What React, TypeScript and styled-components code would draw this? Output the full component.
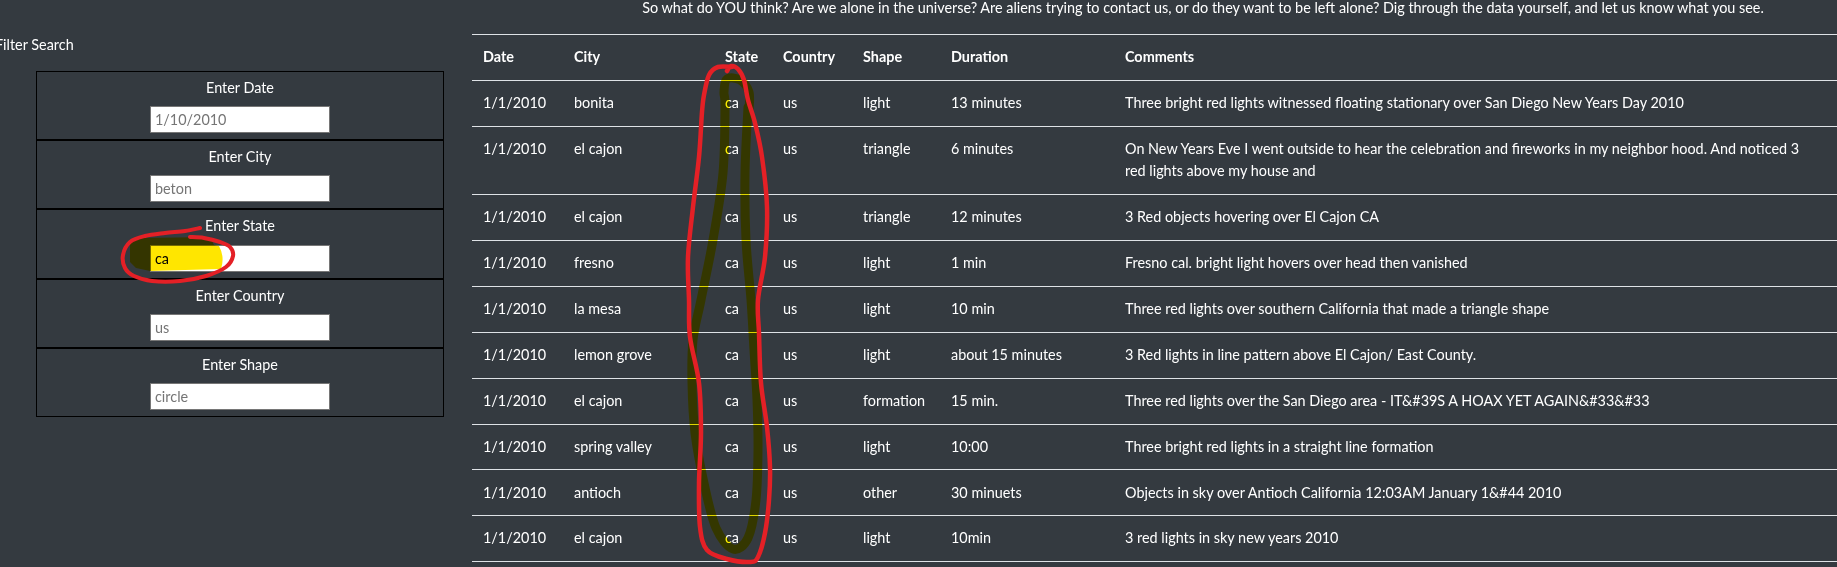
import React from "react";
import styled, { createGlobalStyle } from "styled-components";

const GlobalStyle = createGlobalStyle`
  html, body {
    margin: 0;
    padding: 0;
    background: #343a40;
    overflow: hidden;
  }
  body {
    font-family: Lato, "Open Sans", sans-serif;
    font-size: 14.4px;
    color: #ffffff;
  }
`;

type Sighting = {
  date: string;
  city: string;
  state: string;
  country: string;
  shape: string;
  duration: string;
  comments: string;
};

const sightings: Sighting[] = [
  { date: "1/1/2010", city: "bonita", state: "ca", country: "us", shape: "light", duration: "13 minutes", comments: "Three bright red lights witnessed floating stationary over San Diego New Years Day 2010" },
  { date: "1/1/2010", city: "el cajon", state: "ca", country: "us", shape: "triangle", duration: "6 minutes", comments: "On New Years Eve I went outside to hear the celebration and fireworks in my neighbor hood. And noticed 3 red lights above my house and" },
  { date: "1/1/2010", city: "el cajon", state: "ca", country: "us", shape: "triangle", duration: "12 minutes", comments: "3 Red objects hovering over El Cajon CA" },
  { date: "1/1/2010", city: "fresno", state: "ca", country: "us", shape: "light", duration: "1 min", comments: "Fresno cal. bright light hovers over head then vanished" },
  { date: "1/1/2010", city: "la mesa", state: "ca", country: "us", shape: "light", duration: "10 min", comments: "Three red lights over southern California that made a triangle shape" },
  { date: "1/1/2010", city: "lemon grove", state: "ca", country: "us", shape: "light", duration: "about 15 minutes", comments: "3 Red lights in line pattern above El Cajon/ East County." },
  { date: "1/1/2010", city: "el cajon", state: "ca", country: "us", shape: "formation", duration: "15 min.", comments: "Three red lights over the San Diego area - IT&#39S A HOAX YET AGAIN&#33&#33" },
  { date: "1/1/2010", city: "spring valley", state: "ca", country: "us", shape: "light", duration: "10:00", comments: "Three bright red lights in a straight line formation" },
  { date: "1/1/2010", city: "antioch", state: "ca", country: "us", shape: "other", duration: "30 minuets", comments: "Objects in sky over Antioch California 12:03AM January 1&#44 2010" },
  { date: "1/1/2010", city: "el cajon", state: "ca", country: "us", shape: "light", duration: "10min", comments: "3 red lights in sky new years 2010" },
];

const filters = [
  { label: "Enter Date", placeholder: "1/10/2010" },
  { label: "Enter City", placeholder: "beton" },
  { label: "Enter State", placeholder: "", value: "ca" },
  { label: "Enter Country", placeholder: "us" },
  { label: "Enter Shape", placeholder: "circle" },
];

const columns = [
  { title: "Date", width: 91 },
  { title: "City", width: 151 },
  { title: "State", width: 58 },
  { title: "Country", width: 80 },
  { title: "Shape", width: 88 },
  { title: "Duration", width: 174 },
  { title: "Comments" },
];

// catmull-rom -> bezier, for the hand drawn marks
const smooth = (pts: number[][]) => {
  const p = [pts[0], ...pts, pts[pts.length - 1]];
  let d = `M${p[1][0]} ${p[1][1]}`;
  for (let i = 1; i < p.length - 2; i++) {
    const [x0, y0] = p[i - 1];
    const [x1, y1] = p[i];
    const [x2, y2] = p[i + 1];
    const [x3, y3] = p[i + 2];
    d += ` C${x1 + (x2 - x0) / 6} ${y1 + (y2 - y0) / 6}, ${x2 - (x3 - x1) / 6} ${y2 - (y3 - y1) / 6}, ${x2} ${y2}`;
  }
  return d;
};

const tableLoop = [
  [732, 67], [718, 67], [709, 75], [704, 95], [702, 112], [699, 157], [693, 207], [688, 257],
  [689, 300], [690, 337], [699, 383], [701, 433], [699, 483], [700, 527], [707, 550], [727, 559],
  [750, 562], [758, 557], [765, 533], [769, 500], [770, 467], [767, 427], [761, 383], [759, 333],
  [758, 300], [765, 257], [767, 207], [762, 157], [755, 123], [748, 100], [744, 80], [738, 69],
  [731, 66], [727, 71],
];

const tableMarker = [
  [749, 110], [749, 92], [740, 80], [727, 79], [724, 92], [725, 107], [723, 173], [713, 240],
  [701, 300], [693, 340], [692, 383], [695, 433], [704, 483], [716, 528], [733, 549], [748, 538],
  [756, 500], [758, 450], [757, 400], [754, 350], [751, 300], [746, 240], [745, 173], [748, 107],
];

const formLoop = [
  [200, 228], [185, 231], [165, 233], [145, 236], [130, 242], [123, 255], [125, 268], [134, 276],
  [152, 281], [180, 281], [206, 276], [226, 267], [233, 256], [230, 247], [220, 242], [204, 238],
  [190, 237],
];

export default function App() {
  return (
    <Page>
      <GlobalStyle />
      <Sidebar>
        <SideTitle>Filter Search</SideTitle>
        <FilterPanel>
          {filters.map((f) => (
            <FilterItem key={f.label}>
              <FilterLabel>{f.label}</FilterLabel>
              <FilterInput
                type="text"
                placeholder={f.placeholder}
                defaultValue={f.value}
              />
            </FilterItem>
          ))}
        </FilterPanel>
      </Sidebar>
      <Main>
        <Intro>
          So what do YOU think? Are we alone in the universe? Are aliens trying to contact us, or do they want to be left
          alone? Dig through the data yourself, and let us know what you see.
        </Intro>
        <Table>
          <colgroup>
            {columns.map((c) => (
              <Col key={c.title} $w={c.width} />
            ))}
          </colgroup>
          <thead>
            <tr>
              {columns.map((c) => (
                <Th key={c.title}>{c.title}</Th>
              ))}
            </tr>
          </thead>
          <tbody>
            {sightings.map((s, i) => (
              <tr key={i}>
                <Td>{s.date}</Td>
                <Td>{s.city}</Td>
                <Td>{s.state}</Td>
                <Td>{s.country}</Td>
                <Td>{s.shape}</Td>
                <Td>{s.duration}</Td>
                <Td>{s.comments}</Td>
              </tr>
            ))}
          </tbody>
        </Table>
      </Main>

      <Marks $multiply viewBox="0 0 1837 567">
        <path
          d="M130 243 L139 238 L210 237 L214 245 L219 246 Q225 257 221 269 L150 271 L136 268 L130 262 Z"
          fill="#ffe600"
        />
        <path d={smooth(tableMarker)} fill="none" stroke="#fff200" strokeWidth={9} strokeLinecap="round" strokeLinejoin="round" />
      </Marks>
      <Marks viewBox="0 0 1837 567">
        <path d={smooth(formLoop)} fill="none" stroke="#e42026" strokeWidth={4} strokeLinecap="round" />
        <path d={smooth(tableLoop)} fill="none" stroke="#e42026" strokeWidth={4.5} strokeLinecap="round" />
      </Marks>
    </Page>
  );
}

const Page = styled.div`
  position: relative;
  display: flex;
  width: 1837px;
  height: 567px;
  overflow: hidden;
`;

const Sidebar = styled.aside`
  flex: none;
  width: 472px;
  padding-top: 34px;
  box-sizing: border-box;
`;

const SideTitle = styled.div`
  margin: 0 0 15px -5px;
  line-height: 22px;
`;

const FilterPanel = styled.div`
  margin-left: 36px;
  width: 408px;
`;

const FilterItem = styled.div`
  display: flex;
  flex-direction: column;
  align-items: center;
  padding: 6px 0 6px;
  border: 1px solid #000000;
`;

const FilterLabel = styled.label`
  line-height: 20px;
  margin-bottom: 8.2px;
`;

const FilterInput = styled.input`
  box-sizing: border-box;
  width: 180px;
  height: 27px;
  padding: 0 4px;
  border: 1px solid #767676;
  background: #ffffff;
  font-family: inherit;
  font-size: 14.4px;
  color: #000000;
  outline: none;

  &::placeholder {
    color: #757575;
  }
`;

const Main = styled.main`
  flex: none;
  width: 1390px;
`;

const Intro = styled.p`
  margin: -3px 0 15px;
  padding-left: 72px;
  line-height: 22px;
  text-align: center;
  white-space: nowrap;
`;

const Table = styled.table`
  width: 100%;
  table-layout: fixed;
  border-collapse: collapse;
  border-bottom: 1px solid #dee2e6;
`;

const Col = styled.col<{ $w?: number }>`
  width: ${(p) => (p.$w ? `${p.$w}px` : "auto")};
`;

const Th = styled.th`
  padding: 11.2px 11px;
  border-top: 1px solid #dee2e6;
  text-align: left;
  font-weight: 700;
  line-height: 22.5px;
`;

const Td = styled.td`
  padding: 11.2px 11px;
  border-top: 1px solid #dee2e6;
  vertical-align: top;
  line-height: 22.5px;

  &:last-child {
    padding-right: 40px;
  }
`;

const Marks = styled.svg<{ $multiply?: boolean }>`
  position: absolute;
  top: 0;
  left: 0;
  width: 1837px;
  height: 567px;
  pointer-events: none;
  mix-blend-mode: ${(p) => (p.$multiply ? "multiply" : "normal")};
`;
